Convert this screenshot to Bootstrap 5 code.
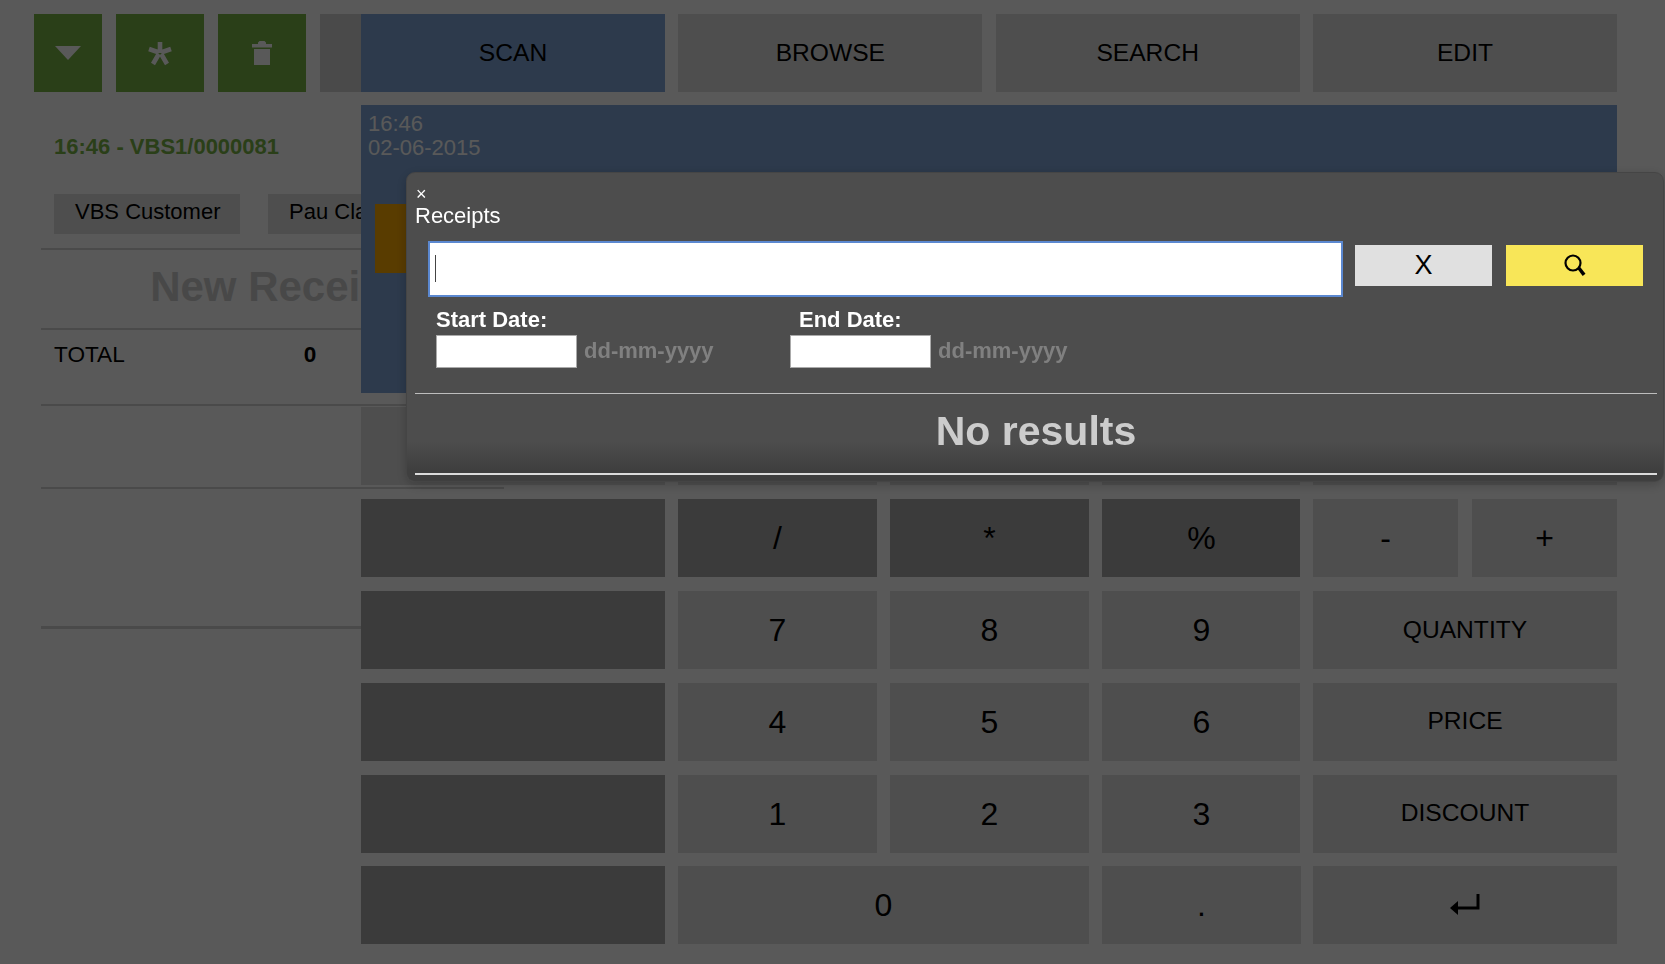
<!DOCTYPE html>
<html lang="en">
<head>
<meta charset="utf-8">
<title>Receipts</title>
<link href="https://cdn.jsdelivr.net/npm/bootstrap@5.3.0/dist/css/bootstrap.min.css" rel="stylesheet">
<style>
html,body{height:100%;}
body{background:#fff;color:#000;font-family:"Liberation Sans",Arial,sans-serif;font-size:22px;overflow:hidden;}
.pos-app{display:grid;grid-template-columns:361px 1256px;height:964px;padding-top:14px;}
.pos-side{width:504px;}
.pos-tools{display:flex;height:78px;margin-left:34px;gap:14px;}
.pos-tool{background:#78b445;border:0;border-radius:0;display:flex;align-items:center;justify-content:center;padding:0;}
.pos-tool svg{fill:#fff;display:block;}
.w-arrow{width:68px;}
.w-star,.w-trash{width:88px;}
.w-more{width:180px;background:#d3d3d3;}
.pos-ticket{margin:43px 0 0 54px;height:24px;line-height:24px;font-weight:700;color:#78b445;}
.pos-tags{display:flex;gap:28px;margin:35px 0 0 54px;height:40px;white-space:nowrap;}
.pos-tag{background:#e0e0e0;height:40px;line-height:36px;padding:0 21px;width:186px;text-align:center;}
.pos-tag.second{width:200px;text-align:left;}
.pos-rule{border-top:2px solid #d5d5d5;margin-left:41px;}
.pos-rule.first{margin-top:14px;}
.pos-title{height:78px;line-height:74px;text-align:center;font-size:42px;font-weight:700;color:#cdcdcd;padding-left:46px;}
.pos-total{display:flex;height:74px;padding:12px 0 0 54px;line-height:26px;font-size:22.600px;}
.pos-total b{margin-left:179px;}
.pos-gap-a{height:81px;}
.pos-gap-b{height:137px;}
.pos-rule.thick{border-top-width:3px;width:320px;}
.pos-main{position:relative;z-index:1;}
.pos-row{display:grid;grid-template-columns:repeat(4,304px);column-gap:13.33px;height:78px;margin-bottom:13.8px;}
.pos-row.tabs{margin-bottom:13px;}
.pos-screen{background:#80a6d9;height:288px;margin-bottom:14.4px;padding:7px 7px;color:#fff;line-height:24px;}
.pos-swatch{background:#ffab00;width:70px;height:69px;margin:44px 0 0 7px;}
.pos-key{background:#e0e0e0;border:0;border-radius:0;color:#000;height:78px;padding:0;font-size:24.600px;display:flex;align-items:center;justify-content:center;min-width:0;}
.pos-key.on{background:#80a6d9;}
.pos-key.dim{background:#aaa;}
.pos-key.num{font-size:32px;}
.pos-mid{grid-column:span 2;display:grid;grid-template-columns:repeat(3,198.2px);column-gap:13.8px;}
.pos-mid.wide{grid-template-columns:410.2px 198.2px;}
.pos-pair{display:grid;grid-template-columns:145px 145px;column-gap:14px;}
.pos-veil{position:fixed;inset:0;background:rgba(0,0,0,.65);z-index:10;}
.pos-dialog{position:fixed;left:406px;top:172px;width:1258px;height:310px;z-index:11;border-radius:9px;border:1px solid #454545;padding:11px 8px 0 8px;color:#fff;background:linear-gradient(#4d4d4d 0,#4d4d4d 268px,#3f3f3f 296px,#3f3f3f 100%);box-shadow:0 3px 12px rgba(0,0,0,.22);}
.pos-close{font-size:18px;line-height:20px;height:20px;padding:0 0 0 1px;background:none;border:0;color:#fff;display:block;}
.pos-head{font-size:22px;line-height:24px;height:24px;margin:0;}
.pos-search{display:flex;margin:13px 0 0 13px;position:relative;}
.pos-field{width:915px;height:56px;border:2px solid #5b88d0;background:#fff;border-radius:0;outline:0;padding:0 6px;font-size:22px;}
.pos-caret{position:absolute;left:7px;top:14px;width:1px;height:27px;background:#444;}
.pos-btn{width:137px;height:41px;margin-top:4px;border:0;border-radius:0;padding:0;display:flex;align-items:center;justify-content:center;color:#000;font-size:27px;line-height:1;}
.pos-btn.clear{background:#e0e0e0;margin-left:12px;}
.pos-btn.go{background:#f8e658;margin-left:14px;}
.pos-dates{display:flex;margin:9px 0 0 21px;font-weight:700;}
.pos-date{width:354px;}
.pos-date label{display:block;height:29px;line-height:27px;margin:0;}
.pos-date.end label{padding-left:9px;}
.pos-date input{width:141px;height:33px;border:1px solid #aaa;background:#fff;border-radius:0;padding:0 4px;vertical-align:top;outline:0;}
.pos-date span{color:#808080;margin-left:7px;line-height:31px;vertical-align:top;display:inline-block;}
.pos-line{height:1px;background:#bdbdbd;margin:25px 0 0 0;opacity:1;border:0;width:1242px;}
.pos-none{height:79px;line-height:74px;text-align:center;font-size:41px;font-weight:700;color:#ccc;margin:0;padding-left:2px;}
.pos-line.end{height:2px;background:#dcdcdc;margin:0;}
</style>
</head>
<body>
<div class="pos-app">
  <aside class="pos-side">
    <div class="pos-tools">
      <button class="pos-tool w-arrow" type="button" aria-label="Menu"><svg width="26" height="14" viewBox="0 0 26 14"><path d="M0 0H26L13 14Z"/></svg></button>
      <button class="pos-tool w-star" type="button" aria-label="Favourite"><svg width="26" height="25" viewBox="0 0 26 25"><path d="M13 12V1M12 11.500 2 8M14 11.500 24 8M11.800 13 6 23M14.200 13 20 23" stroke="#fff" stroke-width="4.600" fill="none"/></svg></button>
      <button class="pos-tool w-trash" type="button" aria-label="Delete"><svg width="20" height="24" viewBox="0 0 20 24"><path d="M0 3h6V1.500L7.500 0h5L14 1.500V3h6v3.500H0ZM2 8h16v16H2Z"/></svg></button>
      <div class="w-more"></div>
    </div>
    <div class="pos-ticket">16:46 - VBS1/0000081</div>
    <div class="pos-tags"><span class="pos-tag">VBS Customer</span><span class="pos-tag second">Pau Clavera</span></div>
    <div class="pos-rule first"></div>
    <div class="pos-title">New Receipt</div>
    <div class="pos-rule"></div>
    <div class="pos-total"><span>TOTAL</span><b>0</b></div>
    <div class="pos-rule"></div>
    <div class="pos-gap-a"></div>
    <div class="pos-rule"></div>
    <div class="pos-gap-b"></div>
    <div class="pos-rule thick"></div>
  </aside>
  <main class="pos-main">
    <div class="pos-row tabs">
      <button class="pos-key on" type="button">SCAN</button>
      <button class="pos-key" type="button">BROWSE</button>
      <button class="pos-key" type="button">SEARCH</button>
      <button class="pos-key" type="button">EDIT</button>
    </div>
    <div class="pos-screen">16:46<br>02-06-2015<div class="pos-swatch"></div></div>
    <div class="pos-row">
      <div class="pos-key"></div>
      <div class="pos-mid"><div class="pos-key"></div><div class="pos-key"></div><div class="pos-key"></div></div>
      <div class="pos-key"></div>
    </div>
    <div class="pos-row">
      <div class="pos-key dim"></div>
      <div class="pos-mid"><button class="pos-key dim num" type="button">/</button><button class="pos-key dim num" type="button">*</button><button class="pos-key dim num" type="button">%</button></div>
      <div class="pos-pair"><button class="pos-key num" type="button">-</button><button class="pos-key num" type="button">+</button></div>
    </div>
    <div class="pos-row">
      <div class="pos-key dim"></div>
      <div class="pos-mid"><button class="pos-key num" type="button">7</button><button class="pos-key num" type="button">8</button><button class="pos-key num" type="button">9</button></div>
      <button class="pos-key" type="button">QUANTITY</button>
    </div>
    <div class="pos-row">
      <div class="pos-key dim"></div>
      <div class="pos-mid"><button class="pos-key num" type="button">4</button><button class="pos-key num" type="button">5</button><button class="pos-key num" type="button">6</button></div>
      <button class="pos-key" type="button">PRICE</button>
    </div>
    <div class="pos-row">
      <div class="pos-key dim"></div>
      <div class="pos-mid"><button class="pos-key num" type="button">1</button><button class="pos-key num" type="button">2</button><button class="pos-key num" type="button">3</button></div>
      <button class="pos-key" type="button">DISCOUNT</button>
    </div>
    <div class="pos-row">
      <div class="pos-key dim"></div>
      <div class="pos-mid wide"><button class="pos-key num" type="button">0</button><button class="pos-key num" type="button">.</button></div>
      <button class="pos-key" type="button" aria-label="Enter"><svg width="30" height="22" viewBox="0 0 30 22"><path d="M28 0v14H6" fill="none" stroke="#000" stroke-width="3"/><path d="M0 14l8-7v14Z"/></svg></button>
    </div>
  </main>
</div>
<div class="pos-veil"></div>
<section class="pos-dialog">
  <button class="pos-close" type="button" aria-label="Close">×</button>
  <h2 class="pos-head">Receipts</h2>
  <div class="pos-search">
    <input class="pos-field" type="text" aria-label="Search receipts">
    <span class="pos-caret"></span>
    <button class="pos-btn clear" type="button">X</button>
    <button class="pos-btn go" type="button" aria-label="Search"><svg width="22" height="23" viewBox="0 0 22 23"><circle cx="9" cy="9" r="7.500" fill="none" stroke="#000" stroke-width="2.200"/><path d="M13.500 15l2.500-2.200 5.500 7-2.800 2.200Z"/></svg></button>
  </div>
  <div class="pos-dates">
    <div class="pos-date"><label>Start Date:</label><input type="text" aria-label="Start date"><span>dd-mm-yyyy</span></div>
    <div class="pos-date end"><label>End Date:</label><input type="text" aria-label="End date"><span>dd-mm-yyyy</span></div>
  </div>
  <hr class="pos-line">
  <p class="pos-none">No results</p>
  <hr class="pos-line end">
</section>
<script src="https://cdn.jsdelivr.net/npm/bootstrap@5.3.0/dist/js/bootstrap.bundle.min.js"></script>
</body>
</html>
